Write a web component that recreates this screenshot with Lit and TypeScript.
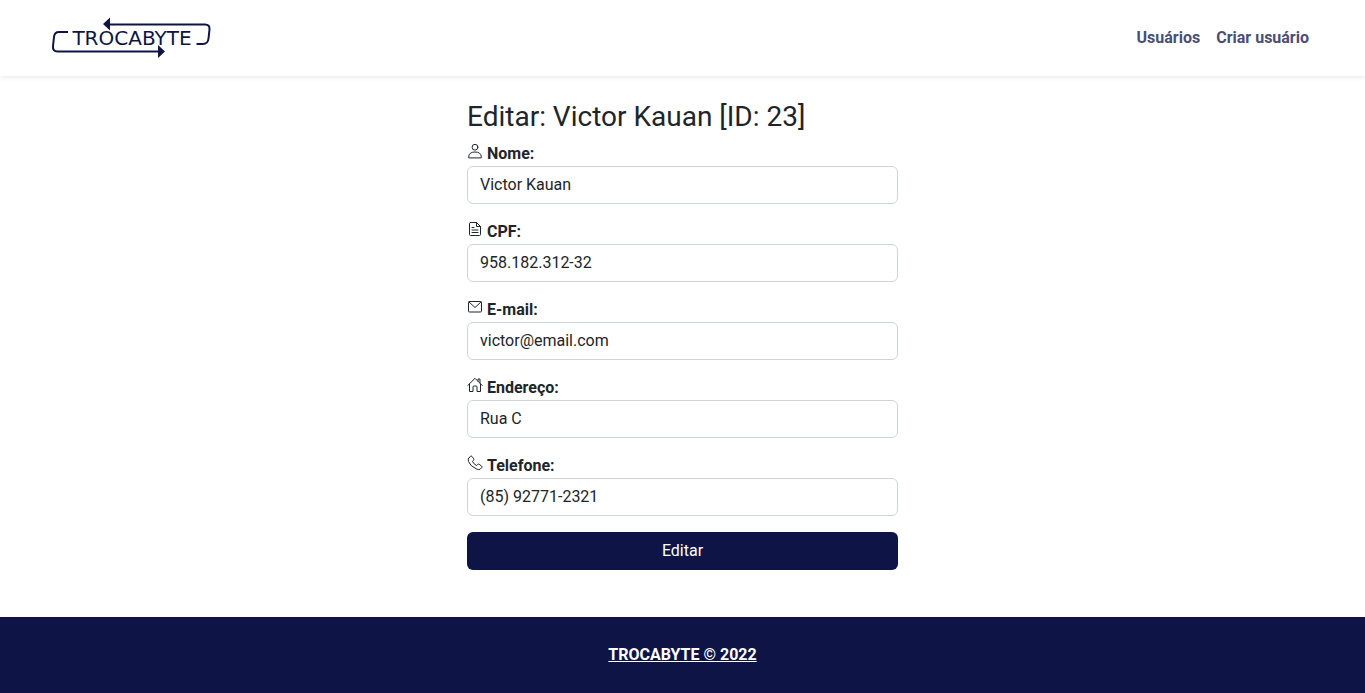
import { LitElement, html, css, svg } from "lit";
import { customElement } from "lit/decorators.js";

const icons = {
  user: svg`<circle cx="8" cy="4.2" r="2.900"/><path d="M1.800 14.500V13c.3-2.500 2.500-4 6.200-4s5.900 1.500 6.200 4v1.500z"/>`,
  file: svg`<path d="M3.500 1.500h6l4 4v8q0 1-1 1h-9q-1 0-1-1v-11q0-1 1-1zM9.500 1.500v4h4M5 6.500h2M5 9h6M5 11.500h6"/>`,
  mail: svg`<rect x="1.500" y="2.500" width="13" height="10.500" rx="1"/><path d="M2 3l6 5.500L14 3"/>`,
  home: svg`<path d="M.8 8.500L8 1.300l7.200 7.200M2.500 7v7.500h3.500V10q0-1 1-1h2q1 0 1 1v4.500h3.500V7M11 4V2h2v4"/>`,
  phone: svg`<path d="M1.500 3.500L3.500 1.200q.8-.5 1.500.3l1.700 2.300q.5.700-.1 1.400L5.500 6.500q1.200 2.500 4 4l1.300-1.100q.7-.6 1.400-.1l2.300 1.700q.8.700.3 1.500l-1.800 1.800q-1 .8-3.500-.3Q3 11 1.500 6.500q-.5-2 0-3z"/>`,
};

const fields = [
  { id: "nome", label: "Nome:", value: "Victor Kauan", icon: icons.user, type: "text" },
  { id: "cpf", label: "CPF:", value: "958.182.312-32", icon: icons.file, type: "text" },
  { id: "email", label: "E-mail:", value: "victor@email.com", icon: icons.mail, type: "email" },
  { id: "endereco", label: "Endereço:", value: "Rua C", icon: icons.home, type: "text" },
  { id: "telefone", label: "Telefone:", value: "(85) 92771-2321", icon: icons.phone, type: "tel" },
];

@customElement("app-root")
export class AppRoot extends LitElement {
  static styles = css`
    :host {
      display: flex;
      flex-direction: column;
      min-height: 100vh;
      font: 400 16px/24px Roboto, sans-serif;
      color: #212529;
      background: #fff;
    }
    * { box-sizing: border-box; }
    .header {
      display: flex;
      align-items: center;
      justify-content: space-between;
      padding: 16px 48px;
      box-shadow: 0 2px 4px rgba(0, 0, 0, 0.075);
    }
    .brand { display: block; height: 44px; }
    .logo { display: block; width: 168px; height: 44px; }
    .wordmark { font: 400 20px "DejaVu Sans", sans-serif; fill: #0e1446; }
    .nav { display: flex; }
    .nav-link {
      padding: 8px;
      color: #494e76;
      font-weight: 700;
      text-decoration: none;
    }
    .main {
      flex: 1;
      width: 33.3333%;
      min-width: 320px;
      margin: 0 auto;
      padding: 24px 12px;
    }
    .title {
      margin: 0 0 8px;
      font-size: 28px;
      font-weight: 400;
      line-height: 34px;
    }
    .field { margin-bottom: 16px; }
    .label { display: flex; gap: 4px; font-weight: 700; }
    .icon {
      width: 16px;
      height: 16px;
      margin-top: 1px;
      fill: none;
      stroke: currentColor;
      stroke-linejoin: round;
      stroke-linecap: round;
    }
    .input {
      display: block;
      width: 100%;
      height: 38px;
      padding: 5px 12px 7px;
      border: 1px solid #ced4da;
      border-radius: 6px;
      background: #fff;
      color: inherit;
      font: inherit;
    }
    .submit {
      display: block;
      width: 100%;
      padding: 7px 12px;
      border: 0;
      border-radius: 6px;
      background: #0e1446;
      color: #fff;
      font: inherit;
    }
    .footer { padding: 26px 12px; background: #0e1446; text-align: center; }
    .footer-link { color: #fff; font-weight: 700; }
  `;

  render() {
    return html`
      <header class="header">
        <a class="brand" href="#" aria-label="Trocabyte">
          <svg class="logo" viewBox="0 0 168 44">
            <g fill="none" stroke="#0e1446" stroke-width="2">
              <path d="M60 8.500h97q5 0 4.500 5l-1 9q-.5 5.500-6 5.500h-6" />
              <path d="M20 16h-9q-4.500 0-5 5l-1 9q-.5 5.500 4.500 5.500H112" />
            </g>
            <path d="M62 1.500v13l-7-6.500zM110 29v13l7-6.500z" fill="#0e1446" />
            <text class="wordmark" x="84" y="29" text-anchor="middle">TROCABYTE</text>
          </svg>
        </a>
        <nav class="nav">
          <a class="nav-link" href="#usuarios">Usuários</a>
          <a class="nav-link" href="#criar">Criar usuário</a>
        </nav>
      </header>
      <main class="main">
        <h1 class="title">Editar: Victor Kauan [ID: 23]</h1>
        <form @submit=${(e: Event) => e.preventDefault()}>
          ${fields.map(
            (f) => html`
              <div class="field">
                <label class="label" for=${f.id}>
                  <svg class="icon" viewBox="0 0 16 16" aria-hidden="true">${f.icon}</svg>${f.label}
                </label>
                <input class="input" id=${f.id} name=${f.id} type=${f.type} .value=${f.value} />
              </div>
            `
          )}
          <button class="submit" type="submit">Editar</button>
        </form>
      </main>
      <footer class="footer">
        <a class="footer-link" href="#">TROCABYTE © 2022</a>
      </footer>
    `;
  }
}
